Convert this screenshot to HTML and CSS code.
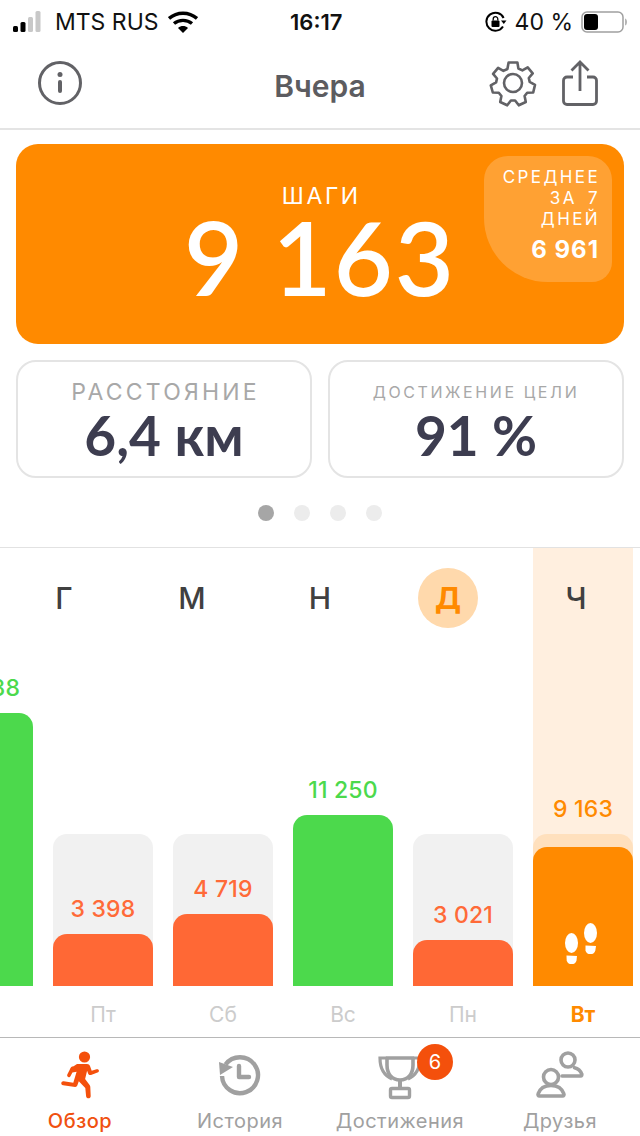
FILE: index.html
```html
<!DOCTYPE html>
<html lang="ru">
<head>
<meta charset="utf-8">
<title>Шаги</title>
<link rel="stylesheet" href="styles.css">
</head>
<body>
<div class="app">
  <div class="status">
    <div class="status-side">
      <svg class="signal" width="34" height="22" viewBox="0 0 34 22"><rect x="0" y="15" width="5" height="6" rx="1.5" fill="#000"/><rect x="7.5" y="11" width="5" height="10" rx="1.5" fill="#000"/><rect x="15" y="6" width="5" height="15" rx="1.5" fill="#c8c8c8"/><rect x="22.5" y="0" width="5" height="21" rx="1.5" fill="#c8c8c8"/></svg>
      <span class="carrier">MTS RUS</span>
      <svg class="wifi" width="30" height="22" viewBox="0 0 30 22"><path d="M1 7.5C9 .5 21 .5 29 7.5" fill="none" stroke="#000" stroke-width="3.4"/><path d="M6 12.5c5-4.2 13-4.2 18 0" fill="none" stroke="#000" stroke-width="3.4"/><path d="M10 17c3-2.6 7-2.6 10 0l-5 5z" fill="#000"/></svg>
    </div>
    <span class="time">16:17</span>
    <div class="status-side status-right">
      <svg class="lock" width="22" height="22" viewBox="0 0 22 22"><path d="M18 15.5A9 9 0 1 1 18.6 7" fill="none" stroke="#000" stroke-width="2"/><path d="M16 9.5h5.5l-2.7 3.4z" fill="#000"/><rect x="6.5" y="9.5" width="8" height="6.5" rx="1" fill="#000"/><path d="M8.2 9.5V8a2.3 2.3 0 0 1 4.6 0v1.5" fill="none" stroke="#000" stroke-width="1.3"/></svg>
      <span class="carrier">40 %</span>
      <svg class="battery" width="47" height="22" viewBox="0 0 47 22"><rect x="1" y="1" width="41" height="20" rx="5" fill="none" stroke="#a0a0a0" stroke-width="1.5"/><rect x="3" y="3" width="14" height="16" rx="3" fill="#000"/><path d="M44 7.5c1.6.5 2 2 2 3.5s-.4 3-2 3.5z" fill="#b5b5b5"/></svg>
    </div>
  </div>

  <div class="nav">
    <svg class="nav-info" width="46" height="46" viewBox="0 0 46 46"><circle cx="23" cy="23" r="20.5" fill="none" stroke="#626266" stroke-width="3"/><circle cx="23" cy="14.5" r="2.5" fill="#626266"/><rect x="21" y="20" width="4" height="13" rx="2" fill="#626266"/></svg>
    <h1 class="nav-title">Вчера</h1>
    <div class="nav-actions">
      <svg width="48" height="48" viewBox="0 0 48 48"><path d="M19.6 3.5h8.8l1 6 4 1.9 5.3-3 5 6-3.9 4.6.9 3.9 5.3 3-1.8 7.600-6 .2-2.600 3.300 1.200 6-7 3.300-3.700-4.800h-4.200l-3.700 4.800-7-3.300 1.200-6-2.600-3.300-6-.2L1.800 26.400l5.300-3 .9-3.900-3.900-4.600 5-6 5.300 3 4-1.900z" fill="none" stroke="#626266" stroke-width="2.600" stroke-linejoin="round"/><circle cx="24" cy="24" r="9" fill="none" stroke="#626266" stroke-width="2.600"/></svg>
      <svg width="36" height="46" viewBox="0 0 36 46"><path d="M11 17H5a3.500 3.500 0 0 0-3.500 3.500v20.500a3.500 3.500 0 0 0 3.500 3.500h26a3.500 3.500 0 0 0 3.500-3.500V20.500A3.500 3.500 0 0 0 31 17h-6" fill="none" stroke="#626266" stroke-width="2.800"/><path d="M18 31V2.500M9.500 10.500L18 2l8.500 8.500" fill="none" stroke="#626266" stroke-width="2.800"/></svg>
    </div>
  </div>

  <div class="summary">
    <section class="hero">
      <div class="hero-main">
        <div class="hero-label">ШАГИ</div>
        <div class="hero-value">9 163</div>
      </div>
      <div class="hero-avg">
        <div class="avg-label">СРЕДНЕЕ<br>ЗА 7<br>ДНЕЙ</div>
        <div class="avg-value">6 961</div>
      </div>
    </section>
    <div class="stats">
      <div class="stat">
        <div class="stat-label">РАССТОЯНИЕ</div>
        <div class="stat-value">6,4 км</div>
      </div>
      <div class="stat">
        <div class="stat-label stat-label-small">ДОСТИЖЕНИЕ ЦЕЛИ</div>
        <div class="stat-value">91 %</div>
      </div>
    </div>
    <div class="dots">
      <span class="dot dot-on"></span><span class="dot"></span><span class="dot"></span><span class="dot"></span>
    </div>
  </div>

  <section class="chart">
    <div class="letters">
      <span class="letter">Г</span>
      <span class="letter">М</span>
      <span class="letter">Н</span>
      <span class="letter letter-on">Д</span>
      <span class="letter">Ч</span>
    </div>
    <div class="bars">
      <div class="col">
        <div class="track track-none">
          <div class="val val-green">12 288</div>
          <div class="fill fill-green fill-a"></div>
        </div>
        <div class="day">Чт</div>
      </div>
      <div class="col">
        <div class="track">
          <div class="val val-red">3 398</div>
          <div class="fill fill-red fill-b"></div>
        </div>
        <div class="day">Пт</div>
      </div>
      <div class="col">
        <div class="track">
          <div class="val val-red">4 719</div>
          <div class="fill fill-red fill-c"></div>
        </div>
        <div class="day">Сб</div>
      </div>
      <div class="col">
        <div class="track track-none">
          <div class="val val-green">11 250</div>
          <div class="fill fill-green fill-d"></div>
        </div>
        <div class="day">Вс</div>
      </div>
      <div class="col">
        <div class="track">
          <div class="val val-red">3 021</div>
          <div class="fill fill-red fill-e"></div>
        </div>
        <div class="day">Пн</div>
      </div>
      <div class="col col-today">
        <div class="col-today-bg">
          <div class="val val-orange">9 163</div>
          <div class="track track-today">
            <div class="fill fill-orange fill-f">
              <svg class="feet" width="33" height="42" viewBox="0 0 33 42"><ellipse cx="6.500" cy="20" rx="6.500" ry="10" fill="#fff"/><path d="M1.500 32.500l10.500.6-.5 4.400a5 4.500 0 0 1-9.800 0z" fill="#fff"/><ellipse cx="25.500" cy="10" rx="6.500" ry="10" fill="#fff"/><path d="M20.500 22.500l10.500.6-.7 4.400a5 4.500 0 0 1-9.800 0z" fill="#fff"/></svg>
            </div>
          </div>
        </div>
        <div class="day day-on">Вт</div>
      </div>
    </div>
  </section>

  <nav class="tabs">
    <div class="tab tab-on">
      <svg width="40" height="50" viewBox="0 0 40 50"><circle cx="24.500" cy="6" r="5.600" fill="#f4500c"/><path d="M17 13h10c1.500 0 2.500.7 3 2l1.700 4.800 4.800-1.500c2.500-.8 3.500 2.400 1 3.300l-6.500 2.300c-1.200.4-2.300 0-2.800-1.200l-1.100-2.900-2 8.300 4.500 5.800c.5.700.7 1.300.7 2l.4 9c.2 3-4.300 3.300-4.600.3l-.8-8.300-6.500-6.700-1.500 4.300c-.4 1-1.200 1.500-2.200 1.400l-12-1.700c-2.800-.4-2.200-4.300.6-3.900l9.600 1.500 3.300-11-4.200.6-1.800 3.500c-1 2.400-4.300 1.100-3.300-1.300l2.300-4.600c1-3 2-3.500 4-3.700z" fill="#f4500c"/></svg>
      <span class="tab-label">Обзор</span>
    </div>
    <div class="tab">
      <svg width="46" height="50" viewBox="0 0 46 50"><path d="M8.500 13.500A18 18 0 1 1 5 25" fill="none" stroke="#a0a0a0" stroke-width="4.400"/><path d="M2 11l14 5-13 8z" fill="#a0a0a0"/><path d="M22 15v11h10" fill="none" stroke="#a0a0a0" stroke-width="4.400" stroke-linecap="round" stroke-linejoin="round"/></svg>
      <span class="tab-label">История</span>
    </div>
    <div class="tab">
      <svg width="44" height="50" viewBox="0 0 44 50"><path d="M9 7h26v7c0 9-5 15-13 15S9 23 9 14z" fill="none" stroke="#a0a0a0" stroke-width="3.600" stroke-linejoin="round"/><path d="M9 7H2c0 9 3 17 12 21M35 7h7c0 9-3 17-12 21" fill="none" stroke="#a0a0a0" stroke-width="3.200"/><path d="M20 29h4v8h-4z" fill="#a0a0a0"/><rect x="12.500" y="37.500" width="19" height="9" rx="1.500" fill="none" stroke="#a0a0a0" stroke-width="3.400"/></svg>
      <span class="tab-badge">6</span>
      <span class="tab-label">Достижения</span>
    </div>
    <div class="tab">
      <svg width="48" height="50" viewBox="0 0 48 50"><circle cx="32" cy="9" r="7" fill="none" stroke="#a0a0a0" stroke-width="3.600"/><path d="M26 25h18.500c1.200 0 1.600-1 1.200-2-1.200-3.300-3.700-5.500-7.200-6.300" fill="none" stroke="#a0a0a0" stroke-width="3.600" stroke-linecap="round"/><circle cx="15" cy="26" r="7.500" fill="none" stroke="#a0a0a0" stroke-width="3.600"/><path d="M3.500 45h23c1.200 0 1.800-1 1.300-2.300C26 37.500 21 34.500 15 34.500S4 37.500 2.200 42.700C1.700 44 2.300 45 3.500 45z" fill="none" stroke="#a0a0a0" stroke-width="3.600" stroke-linejoin="round"/></svg>
      <span class="tab-label">Друзья</span>
    </div>
  </nav>
</div>
</body>
</html>
```

FILE: styles.css
```css
* { box-sizing: border-box; }
html, body { margin: 0; padding: 0; background: #fff; }
.app {
  width: 640px;
  height: 1136px;
  overflow: hidden;
  display: flex;
  flex-direction: column;
  font-family: Inter, "Liberation Sans", sans-serif;
  background: #fff;
}

.status {
  height: 44px;
  padding: 0 12px 0 13px;
  display: flex;
  align-items: center;
  justify-content: space-between;
  position: relative;
  color: #111;
}
.status-side { display: flex; align-items: center; gap: 8px; }
.status-right { gap: 8px; }
.wifi { margin-left: 1px; }
.carrier { font-size: 23px; line-height: 26px; }
.time { font-size: 22px; font-weight: 600; position: absolute; left: 290px; line-height: 26px; }

.nav {
  height: 86px;
  padding: 0 42px 6px 37px;
  display: flex;
  align-items: center;
  justify-content: space-between;
  position: relative;
  border-bottom: 2px solid #e4e4e4;
}
.nav-title {
  position: absolute;
  left: 0;
  right: 0;
  top: 24px;
  margin: 0;
  text-align: center;
  font-size: 30px;
  font-weight: 600;
  color: #5c5c60;
  line-height: 36px;
}
.nav-actions { display: flex; align-items: center; gap: 25px; }

.summary { padding: 14px 16px 0; height: 418px; border-bottom: 1px solid #e2e2e2; }
.hero {
  height: 200px;
  background: #ff8a00;
  border-radius: 22px;
  padding: 12px 12px 0 0;
  position: relative;
  display: flex;
  color: #fff;
}
.hero-main { position: absolute; left: 0; right: 0; top: 38px; text-align: center; }
.hero-label { font-size: 23px; letter-spacing: 2.6px; text-indent: 2.6px; line-height: 28px; }
.hero-value { font-family: Lato, Inter, sans-serif; font-size: 102px; font-weight: 600; line-height: 88px; margin-top: 3px; letter-spacing: 2px; }
.hero-avg {
  margin-left: auto;
  width: 128px;
  height: 126px;
  padding: 11px 14px 0 0;
  text-align: right;
  background: rgba(255, 255, 255, 0.2);
  border-radius: 24px 24px 20px 64px;
  position: relative;
}
.avg-label { font-size: 17px; letter-spacing: 2.4px; line-height: 21px; margin-right: -2px; word-spacing: 4px; }
.avg-value { font-size: 24px; font-weight: 700; line-height: 30px; margin-top: 5px; letter-spacing: 1px; margin-right: -1px; }

.stats { display: grid; grid-template-columns: 296px 296px; gap: 16px; margin-top: 16px; }
.stat {
  height: 118px;
  border: 2px solid #e4e4e4;
  border-radius: 20px;
  text-align: center;
  padding-top: 17px;
}
.stat-label { font-size: 23px; letter-spacing: 3.2px; text-indent: 3.2px; line-height: 26px; color: #a8a8a8; }
.stat-label-small { font-size: 16px; letter-spacing: 2.6px; text-indent: 0; }
.stat-value { font-family: Lato, Inter, sans-serif; font-size: 55px; font-weight: 700; line-height: 54px; margin-top: 3px; color: #3d3d50; }

.dots { display: flex; justify-content: center; gap: 20px; margin-top: 27px; padding-right: 1px; }
.dot { width: 16px; height: 16px; border-radius: 50%; background: #ececec; }
.dot-on { background: #a6a6a6; }

.chart { flex: 1; position: relative; overflow: hidden; border-bottom: 1px solid #b8b8b8; }
.letters {
  position: absolute;
  z-index: 2;
  top: 20px;
  left: 0;
  right: 0;
  display: grid;
  grid-template-columns: repeat(5, 128px);
  justify-items: center;
}
.letter {
  width: 60px;
  height: 60px;
  border-radius: 50%;
  display: flex;
  align-items: center;
  justify-content: center;
  font-size: 30px;
  font-weight: 500;
  color: #404040;
}
.letter-on { background: #ffd9ac; color: #ff8a00; font-weight: 700; }

.bars { height: 100%; display: flex; gap: 20px; margin-left: -67px; }
.col { width: 100px; flex: none; display: flex; flex-direction: column; justify-content: flex-end; align-items: stretch; }
.track {
  height: 152px;
  background: #f1f1f1;
  border-radius: 14px 14px 0 0;
  display: flex;
  flex-direction: column;
  justify-content: flex-end;
  align-items: stretch;
}
.track-none { background: transparent; }
.val { font-size: 23px; font-weight: 500; letter-spacing: 0.2px; line-height: 28px; text-align: center; margin-bottom: 11px; white-space: nowrap; flex: none; }
.val-green { color: #4cd94c; }
.val-red { color: #ff6a38; }
.val-orange { color: #ff8a00; }
.fill { flex: none; border-radius: 14px 14px 0 0; }
.fill-green { background: #4cd94c; }
.fill-red { background: #ff6835; }
.fill-orange { background: #ff8a00; display: flex; justify-content: center; align-items: flex-end; padding: 0 3px 21px 0; }
.fill-a { height: 273px; }
.fill-b { height: 52px; }
.fill-c { height: 72px; }
.fill-d { height: 171px; }
.fill-e { height: 46px; }
.fill-f { height: 139px; }
.track-today { background: #ffe0bd; }
.col-today-bg { flex: 1; background: #ffefdf; display: flex; flex-direction: column; justify-content: flex-end; }
.day { height: 51px; padding-top: 16px; text-align: center; font-size: 21px; line-height: 26px; color: #cccccc; flex: none; }
.day-on { color: #ff8a00; font-weight: 700; }

.tabs { height: 98px; display: grid; grid-template-columns: repeat(4, 160px); }
.tab { position: relative; display: flex; flex-direction: column; align-items: center; padding-top: 13px; }
.tab-label { font-size: 20px; line-height: 26px; letter-spacing: 0.5px; color: #a0a0a0; margin-top: 7px; white-space: nowrap; }
.tab-on .tab-label { color: #f0500f; font-weight: 500; }
.tab-badge {
  position: absolute;
  left: 97px;
  top: 6px;
  width: 36px;
  height: 36px;
  border-radius: 50%;
  background: #f4500c;
  color: #fff;
  font-size: 20px;
  display: flex;
  align-items: center;
  justify-content: center;
}
```
